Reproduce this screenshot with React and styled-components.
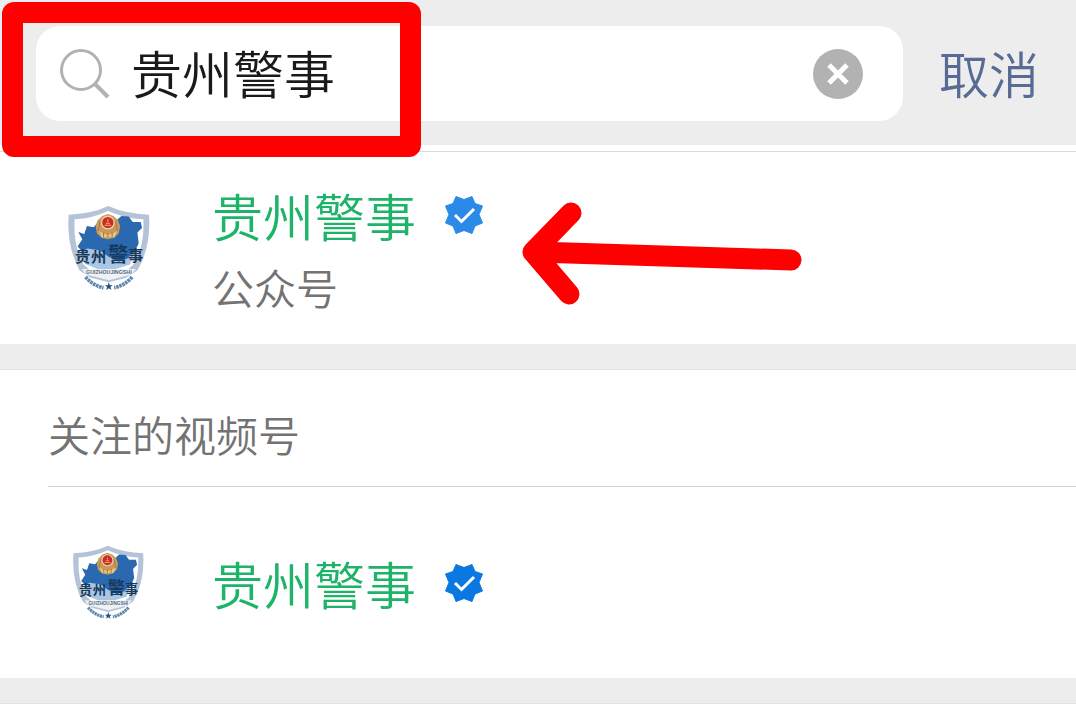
import React, { useState } from "react";
import styled, { createGlobalStyle } from "styled-components";

const GlobalStyle = createGlobalStyle`
  * {
    box-sizing: border-box;
  }
  body {
    margin: 0;
    background: #ededed;
    font-family: "Noto Sans CJK SC", sans-serif;
    font-weight: 350;
  }
  h2, p {
    margin: 0;
    font-weight: 350;
  }
`;

const Page = styled.div`
  position: relative;
  width: 100%;
`;

const Header = styled.form`
  display: flex;
  align-items: center;
  gap: 36px;
  padding: 26px 37px 24px 36px;
  background: #ededed;
`;

const SearchBox = styled.div`
  display: flex;
  flex: 1;
  align-items: center;
  min-width: 0;
  height: 95px;
  padding: 0 40px 0 24px;
  border-radius: 24px;
  background: #fff;
`;

const SearchInput = styled.input`
  flex: 1;
  min-width: 0;
  height: 76px;
  margin-left: 21px;
  padding: 0 0 4px;
  border: 0;
  outline: 0;
  background: transparent;
  color: #1a1a1a;
  font: inherit;
  font-size: 51px;
`;

const ClearButton = styled.button`
  width: 50px;
  height: 50px;
  padding: 0;
  border: 0;
  border-radius: 50%;
  background: #b2b2b2;
  svg {
    display: block;
  }
`;

const CancelButton = styled.button`
  padding: 0 0 4px;
  border: 0;
  background: transparent;
  color: #576b95;
  font: inherit;
  font-size: 50px;
  line-height: 72px;
`;

const Results = styled.section`
  background: #fff;
`;

const Gap = styled.div`
  height: 26px;
  border-bottom: 1px solid #e2e2e2;
  background: #ededed;
`;

const TopLine = styled.div`
  height: 7px;
  margin-bottom: 1px;
  border-bottom: 1px solid #d9d9d9;
`;

const SectionTitle = styled.h2`
  margin-left: 48px;
  padding: 28px 0 16px;
  border-bottom: 1px solid #d4d4d4;
  color: #737373;
  font-size: 42px;
  line-height: 72px;
`;

const Item = styled.a`
  display: flex;
  align-items: center;
  gap: 44px;
  min-height: 191px;
  padding: 0 48px;
  color: inherit;
  text-decoration: none;
`;

const AvatarSlot = styled.div`
  display: flex;
  flex: none;
  justify-content: center;
  width: 120px;
`;

const Info = styled.div`
  padding-top: ${({ $hasKind }) => ($hasKind ? "4px" : "0")};
`;

const NameLine = styled.div`
  display: flex;
  align-items: center;
  gap: 28px;
  color: #1db467;
  font-size: 51px;
  line-height: 72px;
`;

const Kind = styled.p`
  color: #737373;
  font-size: 42px;
  line-height: 72px;
`;

const RedFrame = styled.div`
  position: absolute;
  top: 2px;
  left: 2px;
  width: 419px;
  height: 155px;
  border: 21px solid #fe0000;
  border-radius: 12px;
  pointer-events: none;
`;

const RedArrow = styled.svg`
  position: absolute;
  top: 200px;
  left: 520px;
  pointer-events: none;
`;

const SearchIcon = () => (
  <svg width="50" height="50" viewBox="0 0 50 50" fill="none" stroke="#b2b2b2" strokeWidth="3">
    <circle cx="21" cy="21" r="19.5" />
    <path d="M35 35 L48 48" strokeWidth="4" />
  </svg>
);

// eight-pointed seal with a tick
const Badge = ({ color }) => (
  <svg width="40" height="40" viewBox="0 0 40 40">
    <path
      d="M20 4.500 L28 1.500 L31 8.500 L38.500 11 L35 19.500 L38.500 28 L31 31 L28 38.500 L20 35.500 L12 38.500 L9 31 L1.500 28 L5 19.500 L1.500 11 L9 8.500 L12 1.500 Z"
      fill={color}
      stroke={color}
      strokeLinejoin="round"
    />
    <path d="M11 20 L17.500 26.500 L30 14" fill="none" stroke="#fff" strokeWidth="3" />
  </svg>
);

const Crest = ({ width }) => (
  <svg width={width} viewBox="50 35 250 260">
    <path
      d="M55 64 Q124 62 174 38 Q228 62 297 64 Q304 160 262 232 L228 254 L176 268 L122 254 L88 232 Q48 160 55 64 Z"
      fill="#b4c3d8"
    />
    <path
      d="M73 78 Q128 75 174 53 Q222 75 280 78 Q284 160 250 214 Q222 244 176 258 Q130 244 100 214 Q68 160 73 78 Z"
      fill="#fff"
    />
    <path
      d="M84 116 L102 122 L110 98 L130 102 L146 84 L200 80 L214 68 L236 70 L248 86 L272 86 L276 104 L262 118 L266 150 L254 176 L240 204 L214 216 L190 208 L174 196 L158 210 L132 216 L106 206 L104 184 L82 160 L96 138 Z"
      fill="#2a68b0"
    />
    <path d="M92 176 L112 166 L150 172 L174 190 L206 206 L232 196 L250 176 L240 214 L196 228 H142 L104 212 Z" fill="#a9c6e4" />
    <path
      d="M173 62 L190 68 L204 82 L210 100 L206 120 L192 134 L173 138 L154 134 L140 120 L136 100 L142 82 L156 68 Z"
      fill="#c79a5a"
    />
    <path d="M146 112 Q173 136 202 112 L194 132 H154 Z" fill="#e6c48a" />
    <path d="M150 84 L144 114 M196 84 L202 114 M160 118 V132 M173 120 V134 M186 118 V132" stroke="#a8783d" strokeWidth="3" />
    <circle cx="173" cy="88" r="21" fill="#efd5a4" />
    <circle cx="173" cy="88" r="17" fill="#cb2b28" />
    <path d="M163 96 H183 M167 90 H179 M173 78 V86" stroke="#f0b56b" strokeWidth="3" />
    <g fill="#18395c" fontWeight="700">
      <text x="74" y="207" fontSize="46">贵</text>
      <text x="122" y="207" fontSize="46">州</text>
      <text x="174" y="206" fontSize="60">警</text>
      <text x="234" y="204" fontSize="46">事</text>
    </g>
    <path d="M94 228 H258 L244 244 L176 262 L108 244 Z" fill="#eef3f8" />
    <text x="176" y="243" fontSize="16" fontWeight="700" fill="#5b6675" fontFamily="Liberation Sans" textAnchor="middle">
      GUIZHOUJINGSHI
    </text>
    <path
      d="M106 252 Q128 278 160 284 M246 252 Q224 278 192 284"
      fill="none"
      stroke="#5f88ad"
      strokeWidth="11"
      strokeDasharray="8 2"
    />
    <path d="M176 268 L179 277 L188 277 L181 282 L184 291 L176 286 L168 291 L171 282 L164 277 L173 277 Z" fill="#244f80" />
  </svg>
);

const accounts = [
  { id: 1, name: "贵州警事", kind: "公众号", crest: 83, badge: "#2b8ae8" },
  { id: 2, name: "贵州警事", crest: 72, badge: "#0a78e0" },
];

const Account = ({ account }) => (
  <Item href="#">
    <AvatarSlot>
      <Crest width={account.crest} />
    </AvatarSlot>
    <Info $hasKind={Boolean(account.kind)}>
      <NameLine>
        {account.name}
        <Badge color={account.badge} />
      </NameLine>
      {account.kind && <Kind>{account.kind}</Kind>}
    </Info>
  </Item>
);

const App = () => {
  const [query, setQuery] = useState("贵州警事");

  return (
    <Page>
      <GlobalStyle />
      <Header onSubmit={(e) => e.preventDefault()}>
        <SearchBox>
          <SearchIcon />
          <SearchInput aria-label="搜索" value={query} onChange={(e) => setQuery(e.target.value)} />
          <ClearButton type="button" aria-label="清除" onClick={() => setQuery("")}>
            <svg width="50" height="50" viewBox="0 0 50 50" stroke="#fff" strokeWidth="5">
              <path d="M16 16 L34 34 M34 16 L16 34" />
            </svg>
          </ClearButton>
        </SearchBox>
        <CancelButton type="button">取消</CancelButton>
      </Header>
      <Results>
        <TopLine />
        <Account account={accounts[0]} />
      </Results>
      <Gap />
      <Results>
        <SectionTitle>关注的视频号</SectionTitle>
        <Account account={accounts[1]} />
      </Results>
      <Gap />
      <RedFrame />
      <RedArrow
        width="284"
        height="108"
        viewBox="0 0 284 108"
        fill="none"
        stroke="#fe0000"
        strokeWidth="21"
        strokeLinecap="round"
        strokeLinejoin="round"
      >
        <path d="M51 13 L13 52 L49 94 M17 52 L271 60" />
      </RedArrow>
    </Page>
  );
};

export default App;
